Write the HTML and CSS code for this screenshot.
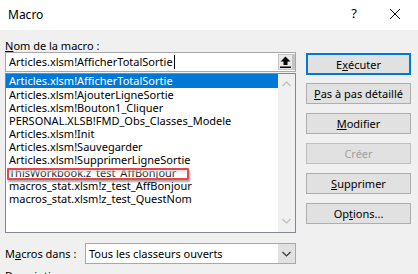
FILE: index.html
```html
<!DOCTYPE html>
<html lang="fr">
<head>
<meta charset="utf-8">
<title>Macro</title>
<link rel="stylesheet" href="styles.css">
</head>
<body>
<div class="window">
  <div class="titlebar">
    <span class="title">Macro</span>
    <span class="help">?</span>
    <span class="close">
      <svg width="12" height="12" viewBox="0 0 12 12"><path d="M1 1 L11 11 M11 1 L1 11" stroke="#000" stroke-width="1" fill="none"/></svg>
    </span>
  </div>
  <div class="content">
    <div class="left">
      <div class="label"><u>N</u>om de la macro :</div>
      <div class="input">
        <div class="input-text">Articles.xlsm!AfficherTotalSortie<span class="caret"></span></div>
        <div class="up-btn">
          <svg width="11" height="12" viewBox="0 0 11 12"><path d="M5.5 0.5 L10.5 5.5 L7.5 5.5 L7.5 9 L3.5 9 L3.5 5.5 L0.5 5.5 Z" fill="#000"/><rect x="0" y="10.5" width="11" height="1.5" fill="#000"/></svg>
        </div>
      </div>
      <div class="list">
        <div class="items">
          <div class="item selected">Articles.xlsm!AfficherTotalSortie</div>
          <div class="item">Articles.xlsm!AjouterLigneSortie</div>
          <div class="item">Articles.xlsm!Bouton1_Cliquer</div>
          <div class="item">PERSONAL.XLSB!FMD_Obs_Classes_Modele</div>
          <div class="item">Articles.xlsm!Init</div>
          <div class="item">Articles.xlsm!Sauvegarder</div>
          <div class="item">Articles.xlsm!SupprimerLigneSortie</div>
          <div class="item">ThisWorkbook.z_test_AffBonjour</div>
          <div class="item">macros_stat.xlsm!z_test_AffBonjour</div>
          <div class="item">macros_stat.xlsm!z_test_QuestNom</div>
          <div class="highlight"></div>
        </div>
        <div class="scrollbar">
          <svg width="9" height="6" viewBox="0 0 9 6"><path d="M0.5 5 L4.5 1 L8.5 5" stroke="#c2c2c2" stroke-width="1.4" fill="none"/></svg>
          <svg width="9" height="6" viewBox="0 0 9 6"><path d="M0.5 1 L4.5 5 L8.5 1" stroke="#c2c2c2" stroke-width="1.4" fill="none"/></svg>
        </div>
      </div>
    </div>
    <div class="buttons">
      <div class="btn default">E<u>x</u>écuter</div>
      <div class="btn"><u>P</u>as à pas détaillé</div>
      <div class="btn"><u>M</u>odifier</div>
      <div class="btn disabled">Créer</div>
      <div class="btn"><u>S</u>upprimer</div>
      <div class="btn">Op<u>t</u>ions...</div>
    </div>
  </div>
  <div class="row-macros">
    <div class="label2">M<u>a</u>cros dans :</div>
    <div class="combo">
      <div class="combo-text">Tous les classeurs ouverts</div>
      <div class="combo-btn">
        <svg width="9" height="6" viewBox="0 0 9 6"><path d="M0.5 1 L4.5 5 L8.5 1" stroke="#333" stroke-width="1.2" fill="none"/></svg>
      </div>
    </div>
  </div>
  <div class="desc">Description</div>
</div>
</body>
</html>
```
FILE: styles.css
```css
html, body {
  margin: 0;
  padding: 0;
}
body {
  width: 418px;
  height: 274px;
  overflow: hidden;
  background: #f0f0f0;
  font-family: "Noto Sans", "Open Sans", sans-serif;
  font-size: 11px;
  color: #000;
}
u { text-decoration: underline; text-underline-offset: 1px; }

.titlebar {
  height: 30px;
  background: #fff;
  display: flex;
  align-items: center;
}
.title {
  margin-left: 8px;
  flex: 1;
  font-size: 12px;
  margin-top: -1px;
}
.help {
  width: 20px;
  font-size: 13px;
  margin-right: 25px;
  text-align: center;
  margin-top: -4px;
}
.close {
  width: 12px;
  margin-right: 17px;
  display: flex;
  margin-top: -3px;
}

.content {
  display: grid;
  grid-template-columns: 291px 105px;
  column-gap: 10px;
  padding: 8px 0 0 5px;
}
.left {
  display: flex;
  flex-direction: column;
}
.label {
  height: 14px;
  line-height: 14px;
  margin-top: 1px;
  margin-bottom: -1px;
}
.input {
  height: 20px;
  box-sizing: border-box;
  border: 1px solid #a8a8a8;
  background: #fff;
  display: flex;
}
.input-text {
  flex: 1;
  padding-left: 3px;
  line-height: 18px;
  white-space: nowrap;
  display: flex;
  align-items: center;
}
.caret {
  display: inline-block;
  width: 1px;
  height: 14px;
  background: #000;
  margin-left: 1px;
}
.up-btn {
  width: 17px;
  box-sizing: border-box;
  border: 1px solid #c4c4c4;
  border-right-width: 3px;
  background: #e8e8e8;
  display: flex;
  align-items: center;
  justify-content: center;
  margin: 1px 0;
}
.list {
  margin-top: 1px;
  height: 160px;
  box-sizing: border-box;
  border: 1px solid #828790;
  background: #fff;
  display: flex;
}
.items {
  flex: 1;
  position: relative;
  padding-top: 1px;
}
.item {
  height: 13px;
  line-height: 13px;
  padding-left: 3px;
  white-space: nowrap;
}
.item.selected {
  background: #0078d7;
  color: #fff;
  height: 14px;
  line-height: 14px;
  margin-top: -1px;
}
.highlight {
  position: absolute;
  left: 1px;
  top: 94px;
  width: 178px;
  height: 8px;
  border: 2px solid #e5474c;
  border-radius: 1px;
  background: linear-gradient(rgba(215, 215, 215, 0.75), rgba(240, 240, 240, 0.1) 60%);
  box-shadow: 1px 2px 2px rgba(0,0,0,0.35);
}
.scrollbar {
  width: 17px;
  background: #f0f0f0;
  display: flex;
  flex-direction: column;
  justify-content: space-between;
  align-items: center;
  padding: 7px 0 8px;
}

.buttons {
  display: flex;
  flex-direction: column;
  gap: 9px;
  padding-top: 15px;
}
.btn {
  height: 21px;
  box-sizing: border-box;
  border: 1px solid #adadad;
  background: #e1e1e1;
  display: flex;
  align-items: center;
  justify-content: center;
}
.btn.default {
  height: 22px;
  border: 2px solid #0078d7;
  margin-bottom: -1px;
}
.btn.disabled {
  color: #a0a0a0;
  border-color: #bfbfbf;
}

.row-macros {
  display: flex;
  align-items: center;
  padding-left: 5px;
  margin-top: 10px;
  width: 291px;
}
.label2 {
  width: 80px;
}
.combo {
  flex: 1;
  height: 21px;
  box-sizing: border-box;
  border: 1px solid #a8a8a8;
  background: #fff;
  display: flex;
}
.combo-text {
  flex: 1;
  padding-left: 3px;
  line-height: 19px;
}
.combo-btn {
  width: 17px;
  background: #e1e1e1;
  display: flex;
  align-items: center;
  justify-content: center;
}
.desc {
  padding-left: 5px;
  margin-top: 4px;
}
```
